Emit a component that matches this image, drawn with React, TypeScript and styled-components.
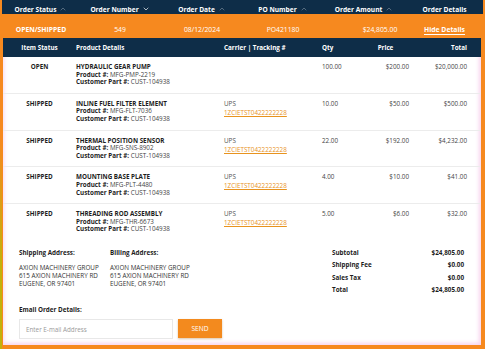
import { Fragment } from 'react';
import styled, { createGlobalStyle } from 'styled-components';
import { ChevronDown, ChevronUp } from 'lucide-react';

const NAVY = '#0e2d48';
const ORANGE = '#f6891f';

const GlobalStyle = createGlobalStyle`
  html, body { margin: 0; padding: 0; }
  body {
    background: ${ORANGE};
    font-family: "Open Sans", "Liberation Sans", sans-serif;
    color: #1d1d1d;
  }
`;

const Frame = styled.div`
  width: 485px;
  height: 349px;
  box-sizing: border-box;
  padding: 0 2px 4px 2px;
  display: flex;
  flex-direction: column;
  overflow: hidden;
  background: linear-gradient(180deg, ${ORANGE} 40%, #c2b20c 75%) left / 2px 100% no-repeat, ${ORANGE};
`;

const SummaryGrid = styled.div`
  flex-shrink: 0;
  box-sizing: border-box;
  display: grid;
  grid-template-columns: 78px 80px 84px 78px 84px 1fr;
  align-items: center;
`;

const HeadRow = styled(SummaryGrid)`
  height: 14px;
  padding-top: 4px;
  background: ${NAVY};
  color: #fff;
  font-size: 6.6px;
  font-weight: 700;
`;

const HeadCell = styled.div<{ $dim?: boolean }>`
  display: flex;
  justify-content: center;
  align-items: center;
  gap: 3px;
  svg { opacity: ${(p) => (p.$dim ? 0.35 : 0.8)}; }
`;

const OrderRow = styled(SummaryGrid)`
  height: 24px;
  padding-top: 6px;
  color: #fff;
  font-size: 6.8px;
`;

const OrderCell = styled.div<{ $bold?: boolean; $shift?: number }>`
  text-align: center;
  font-weight: ${(p) => (p.$bold ? 700 : 400)};
  padding-left: ${(p) => p.$shift || 0}px;
`;

const HideLink = styled.a`
  color: #fff;
  font-weight: 700;
  text-decoration: underline;
  text-underline-offset: 1.5px;
  cursor: pointer;
`;

const Panel = styled.div`
  flex: 1;
  min-height: 0;
  margin: 0 2px 0 1px;
  background: #fff;
  box-shadow: inset 0 -3px 4px -1px #f8d6ef, inset 3px 0 5px -2px #fbe1f4, inset -3px 0 4px -1px #f8d6ef;
  display: flex;
  flex-direction: column;
`;

const ItemGrid = styled.div`
  flex-shrink: 0;
  display: grid;
  grid-template-columns: 73px 148px 98px 40px 47px 58px;
  padding-right: 14px;
`;

const SubHead = styled(ItemGrid)`
  height: 19px;
  align-items: center;
  background: ${NAVY};
  color: #fff;
  font-size: 6.3px;
  font-weight: 700;
`;

const SubCell = styled.div<{ $align?: string }>`
  text-align: ${(p) => p.$align || 'left'};
`;

const ItemRow = styled(ItemGrid)<{ $last?: boolean }>`
  padding-top: 6px;
  padding-bottom: 7px;
  border-bottom: 1px solid ${(p) => (p.$last ? 'transparent' : '#ececec')};
  font-size: 6.3px;
  line-height: 7.6px;
`;

const Status = styled.div`
  text-align: center;
  font-weight: 700;
`;

const ProductName = styled.div`
  font-weight: 700;
  text-transform: uppercase;
`;

const Detail = styled.div`
  color: #444;
  b { color: #1d1d1d; font-weight: 700; }
`;

const Carrier = styled.div`
  color: #555;
`;

const Tracking = styled.a`
  display: block;
  margin-top: 1.4px;
  color: #e8931e;
  text-decoration: underline;
  text-underline-offset: 1px;
`;

const Num = styled.div<{ $align?: string }>`
  text-align: ${(p) => p.$align || 'right'};
  color: #444;
`;

const Footer = styled.div`
  display: flex;
  padding: 8px 17px 0 16px;
  font-size: 6.3px;
`;

const Addresses = styled.div`
  flex: 1;
  display: grid;
  grid-template-columns: 91px 91px;
  align-content: start;
`;

const Address = styled.div`
  line-height: 8px;
  color: #333;
`;

const Label = styled.div`
  font-weight: 700;
  line-height: 8px;
  margin-bottom: 7px;
  color: #1d1d1d;
`;

const Totals = styled.div`
  width: 132px;
  display: grid;
  grid-template-columns: 1fr auto;
  row-gap: 4.4px;
  line-height: 8px;
  font-weight: 700;
`;

const TotalValue = styled.span`
  text-align: right;
`;

const EmailBox = styled.div`
  padding: 12px 16px 0;
  font-size: 6.3px;
`;

const EmailLabel = styled.div`
  font-weight: 700;
  line-height: 8px;
  margin-bottom: 5px;
`;

const EmailRow = styled.div`
  display: flex;
  gap: 5px;
  align-items: flex-start;
`;

const EmailInput = styled.input`
  width: 154px;
  height: 20px;
  box-sizing: border-box;
  border: 1px solid #e8e8e8;
  padding: 0 6px;
  font-family: inherit;
  font-size: 6.3px;
  outline: none;
  &::placeholder { color: #9a9a9a; }
`;

const SendButton = styled.button`
  width: 44px;
  height: 19px;
  border: none;
  background: #f38a1e;
  color: #fff;
  font-family: inherit;
  font-size: 6.6px;
  box-shadow: 0 1px 2px rgba(150, 80, 0, 0.35);
  cursor: pointer;
`;

const items = [
  { status: 'OPEN', name: 'Hydraulic Gear Pump', sku: 'MFG-PMP-2219', qty: '100.00', price: '$200.00', total: '$20,000.00', shipped: false },
  { status: 'SHIPPED', name: 'Inline Fuel Filter Element', sku: 'MFG-FLT-7036', qty: '10.00', price: '$50.00', total: '$500.00', shipped: true },
  { status: 'SHIPPED', name: 'Thermal Position Sensor', sku: 'MFG-SNS-8902', qty: '22.00', price: '$192.00', total: '$4,232.00', shipped: true },
  { status: 'SHIPPED', name: 'Mounting Base Plate', sku: 'MFG-PLT-4480', qty: '4.00', price: '$10.00', total: '$41.00', shipped: true },
  { status: 'SHIPPED', name: 'Threading Rod Assembly', sku: 'MFG-THR-6673', qty: '5.00', price: '$6.00', total: '$32.00', shipped: true },
];

const address = ['AXION MACHINERY GROUP', '615 AXION MACHINERY RD', 'EUGENE, OR 97401'];

const totals = [
  ['Subtotal', '$24,805.00'],
  ['Shipping Fee', '$0.00'],
  ['Sales Tax', '$0.00'],
  ['Total', '$24,805.00'],
];

export default function App() {
  return (
    <>
      <GlobalStyle />
      <Frame>
        <HeadRow>
          <HeadCell $dim>Order Status <ChevronUp size={8} strokeWidth={2.5} /></HeadCell>
          <HeadCell>Order Number <ChevronDown size={8} strokeWidth={2.5} /></HeadCell>
          <HeadCell $dim>Order Date <ChevronUp size={8} strokeWidth={2.5} /></HeadCell>
          <HeadCell $dim>PO Number <ChevronUp size={8} strokeWidth={2.5} /></HeadCell>
          <HeadCell $dim>Order Amount <ChevronUp size={8} strokeWidth={2.5} /></HeadCell>
          <HeadCell>Order Details</HeadCell>
        </HeadRow>

        <OrderRow>
          <OrderCell $bold>OPEN/SHIPPED</OrderCell>
          <OrderCell>549</OrderCell>
          <OrderCell>08/12/2024</OrderCell>
          <OrderCell>PO421180</OrderCell>
          <OrderCell $shift={32}>$24,805.00</OrderCell>
          <OrderCell><HideLink>Hide Details</HideLink></OrderCell>
        </OrderRow>

        <Panel>
          <SubHead>
            <SubCell $align="center">Item Status</SubCell>
            <SubCell>Product Details</SubCell>
            <SubCell>Carrier | Tracking #</SubCell>
            <SubCell>Qty</SubCell>
            <SubCell $align="center">Price</SubCell>
            <SubCell $align="right">Total</SubCell>
          </SubHead>

          {items.map((it, i) => (
            <ItemRow key={it.sku} $last={i === items.length - 1}>
              <Status>{it.status}</Status>
              <div>
                <ProductName>{it.name}</ProductName>
                <Detail><b>Product #:</b> {it.sku}</Detail>
                <Detail><b>Customer Part #:</b> CUST-104938</Detail>
              </div>
              <div>
                {it.shipped && (
                  <>
                    <Carrier>UPS</Carrier>
                    <Tracking>1ZCIETST0422222228</Tracking>
                  </>
                )}
              </div>
              <Num $align="left">{it.qty}</Num>
              <Num>{it.price}</Num>
              <Num>{it.total}</Num>
            </ItemRow>
          ))}

          <Footer>
            <Addresses>
              <div>
                <Label>Shipping Address:</Label>
                {address.map((l) => <Address key={l}>{l}</Address>)}
              </div>
              <div>
                <Label>Billing Address:</Label>
                {address.map((l) => <Address key={l}>{l}</Address>)}
              </div>
            </Addresses>
            <Totals>
              {totals.map(([k, v]) => (
                <Fragment key={k}>
                  <span>{k}</span>
                  <TotalValue>{v}</TotalValue>
                </Fragment>
              ))}
            </Totals>
          </Footer>

          <EmailBox>
            <EmailLabel>Email Order Details:</EmailLabel>
            <EmailRow>
              <EmailInput placeholder="Enter E-mail Address" />
              <SendButton>SEND</SendButton>
            </EmailRow>
          </EmailBox>
        </Panel>
      </Frame>
    </>
  );
}
